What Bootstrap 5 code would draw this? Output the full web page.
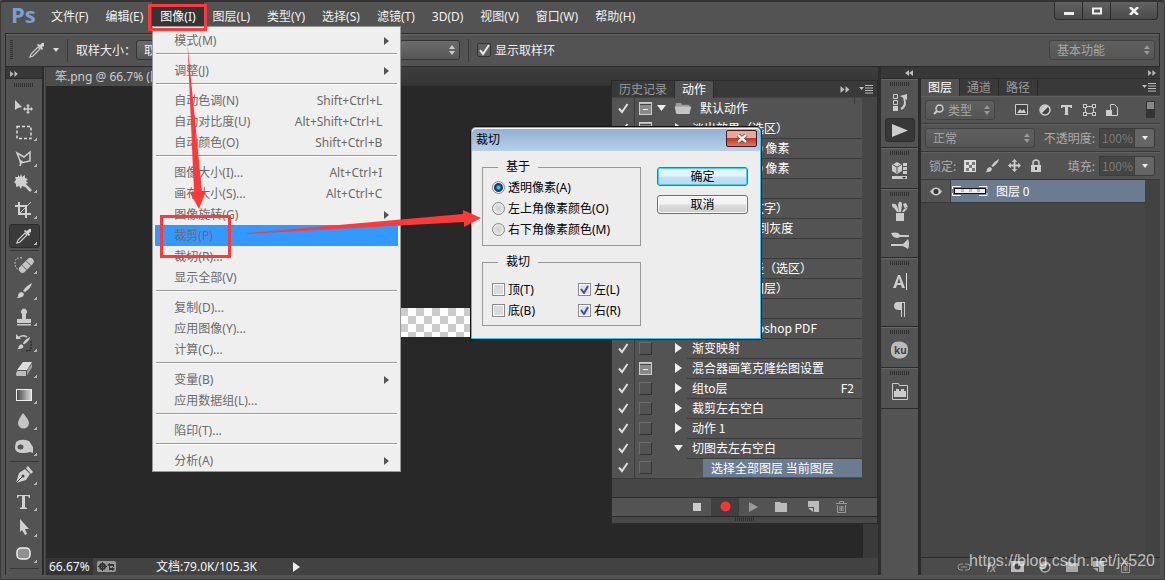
<!DOCTYPE html>
<html lang="zh-CN" data-bs-theme="dark">
<head>
<meta charset="utf-8">
<meta name="viewport" content="width=device-width, initial-scale=1">
<title>Photoshop</title>
<link href="https://cdn.jsdelivr.net/npm/bootstrap@5.3.0/dist/css/bootstrap.min.css" rel="stylesheet">
<style>
:root{--ui:#535353;--deep:#282828;--line:#2b2b2b;--hi:#666;--red:#fd3939}
body{font-family:"Noto Sans","Noto Sans CJK SC",sans-serif;font-size:12px;line-height:16px;color:#f0f0f0;background:var(--ui)}
button,input,select{font:inherit;color:inherit}
button{padding:0;border:0;background:none}
a{color:inherit;text-decoration:none}
svg{display:block;flex:none}
.cjk{font-family:"Noto Sans CJK SC",sans-serif}
.app{min-height:100vh;border:1px solid #3a3a3a;border-top:2px solid #333;border-radius:4px 4px 0 0;overflow:hidden}
.topbar{height:31px}
.logo{font:bold 22px/24px "Open Sans","Noto Sans",sans-serif;color:#76a0d4;width:42px;padding-left:10px}
.menus{gap:1px}
.menus>li>a{display:block;padding:7px 8px 4px;line-height:16px;white-space:nowrap}
.menus>li>a.open{background:#353535;color:#fff}
.winbtns{height:18px;border:1px solid var(--line);border-top:0;border-radius:0 0 4px 4px;background:linear-gradient(#626262,#4b4b4b);margin-right:6px;align-self:flex-start}
.winbtns button{width:28px;border-right:1px solid var(--line)}
.winbtns button:last-child{width:46px;border:0}
.options{height:33px;margin:0 4px 0 4px;border:1px solid var(--line);border-bottom:0;box-shadow:inset 0 1px var(--hi)}
.vgrip{width:3px;height:20px;background:repeating-linear-gradient(#333 0 1px,transparent 1px 2px)}
.vsep{width:1px;height:23px;background:#3a3a3a}
.ps-select{appearance:none;height:20px;border:1px solid #333;border-radius:3px;padding:0 20px 0 7px;color:#f0f0f0;background:url("data:image/svg+xml,%3Csvg xmlns='http://www.w3.org/2000/svg' width='6' height='10'%3E%3Cpath d='M0 4l3-4 3 4zM0 6l3 4 3-4z' fill='%23ccc'/%3E%3C/svg%3E") no-repeat right 4px center,linear-gradient(#6b6b6b,#575757);line-height:16px}
.ps-select.dim{color:#a5a5a5;border-color:#424242;background:url("data:image/svg+xml,%3Csvg xmlns='http://www.w3.org/2000/svg' width='6' height='10'%3E%3Cpath d='M0 4l3-4 3 4zM0 6l3 4 3-4z' fill='%23999'/%3E%3C/svg%3E") no-repeat right 4px center,linear-gradient(#606060,#555)}
.ps-select.size{width:324px}
.ps-select.space{width:106px}
.ps-select.kind{width:70px;padding-left:22px}
.ps-select.blend{width:110px}
.ps-check{appearance:none;width:14px;height:14px;margin:0;border:1px solid #333;border-radius:2px;background:url("data:image/svg+xml,%3Csvg xmlns='http://www.w3.org/2000/svg' width='12' height='12'%3E%3Cpath d='M2 6l3 4 6-9' fill='none' stroke='%23e8e8e8' stroke-width='2'/%3E%3C/svg%3E") center,#606060}
.stage{margin:0 4px;border-top:1px solid var(--line)}
.strip{height:12px;background:#383838;border-bottom:1px solid var(--line);color:#bbb}
.tools{width:39px;border-left:1px solid var(--line);border-right:2px solid var(--line)}
.hgrip{width:20px;height:4px;background:repeating-linear-gradient(90deg,#303030 0 1px,transparent 1px 2px)}
.tools>.hgrip{margin:4px 0 6px}
.tool{width:31px;height:26px;position:relative;color:#d0d0d0}
.tool::after{content:"";position:absolute;right:3px;bottom:4px;width:3px;height:3px;background:linear-gradient(135deg,transparent 45%,#b5b5b5 50%)}
.tool.plain::after{display:none}
.tool.on{background:#3a3a3a;border:1px solid #2c2c2c;border-radius:3px;height:24px;margin:1px 0}
.tool.on::after{right:2px;bottom:2px}
.toolsep{width:29px;height:1px;background:#3a3a3a;margin:1px 0}
.docarea{background:var(--deep);border-left:1px solid #444;margin-left:1px}
.doctabs{height:19px;background:linear-gradient(#3e3e3e,#343434)}
.doctab{background:#4c4c4c;color:#ccc;padding:1px 9px;line-height:18px;white-space:nowrap}
.checker{width:95px;height:29px;margin:222px 0 0 330px;background:repeating-conic-gradient(#ccc 0 25%,#fff 0 50%) 0 0/16px 16px}
.vscroll{width:15px;background:#3a3a3a}
.status{height:17px;background:#424242;color:#f5f5f5;line-height:17px}
.status>.zoomval{background:#343434;width:47px;padding-left:3px}
.dock{width:282px;border-left:3px solid #2e2e2e}
.iconcol{width:38px;border-right:1px solid var(--line)}
.igroup{border-bottom:1px solid var(--line);box-shadow:inset 0 1px var(--hi);padding:3px 0}
.igroup .hgrip{margin-bottom:2px}
.ibtn{width:30px;height:28px;color:#ccc}
.ibtn.on{height:24px;margin:2px 0;background:#383838;border:1px solid var(--line);border-radius:3px}
.layers{border-left:2px solid var(--line)}
.ptabs{height:17px;background:#393939;border-bottom:1px solid #444}
.ptabs .nav-link{padding:0 7px;height:17px;line-height:15px;color:#999;border-right:1px solid var(--line);border-radius:0}
.ptabs .nav-link.active{background:var(--ui);color:#fff}
.prow{height:28px;padding:0 5px 0 4px;border-bottom:1px solid #3a3a3a;box-shadow:inset 0 1px #606060;color:#aaa}
.pct{width:36px;height:20px;border:1px solid #3c3c3c;background:#454545;color:#777;padding:0 0 0 2px;line-height:18px}
.pctb{width:20px;height:20px;border:1px solid #3c3c3c;border-left:0;border-radius:0 3px 3px 0;background:#666}
.layerlist{background:#464646;border-right:15px solid #424242}
.layerrow{height:23px;border-bottom:1px solid #3a3a3a;background:#535353}
.layerrow .eye{width:30px;border-right:1px solid #3a3a3a}
.layerrow .pick{background:#6b7b90;color:#fff;padding-left:1px}
.pfoot{height:18px;color:#aaa;background:#4b4b4b;border-top:1px solid var(--line)}
.pfoot button{width:27px}
.actfoot button{width:28px}
.watermark{position:absolute;right:9px;bottom:8px;font:16px/20px "Liberation Sans",sans-serif;color:rgba(255,255,255,.65)}
.actions{position:absolute;right:286px;top:78px;width:267px;background:#464646;border:1px solid var(--line);color:#fff}
.acts{width:250px;background:#535353;border-collapse:collapse;border-bottom:1px solid #3a3a3a}
.acts td{height:20px;padding:0;vertical-align:middle}
.acts .c1{width:22px;padding-left:2px;border-right:1px solid #3a3a3a}
.acts .c2{width:20px}
.acts .c3{width:33px}
.acts .nm{border-bottom:1px solid #3a3a3a;padding-left:5px;white-space:nowrap}
.acts .nm.deep span{display:block;background:#6b7b90;margin-left:11px;padding-left:8px;line-height:18px}
.acts .nm.head{border:0;padding-left:3px}
.bx{width:13px;height:13px;border:1px solid #6b6b6b;border-color:#6b6b6b #333 #333 #6b6b6b;margin-left:4px}
.bx.full{background:linear-gradient(#bbb 0 1px,#444 1px 2px,#8a8a8a 2px),#8a8a8a;border-color:#ccc;position:relative}
.bx.full::after{content:"";position:absolute;left:3px;top:6px;width:5px;height:1px;background:#eee}
.actgap{height:18px}
.actfoot{height:19px;border-top:1px solid var(--line);background:#535353;color:#bbb;padding-right:18px}
.actfoot .rec{background:#404040}
.actbot{height:7px;border-top:1px solid var(--line);background:#484848}
.psmenu{position:absolute;left:0;top:100%;z-index:5;width:249px;margin:-3px 0 0;padding:3px 2px 0;background:#efefef;border:1px solid #999;color:#6b6b6b;list-style:none}
.psmenu a{display:flex;justify-content:space-between;align-items:center;height:21px;padding:0 16px 0 19px;line-height:20px}
.psmenu a.hot{background:#3399ff}
.psmenu a.sub{padding-right:9px}
.psmenu hr{margin:2px 1px 5px;border:0;border-top:1px solid #999;border-bottom:1px solid #fff;opacity:1;height:2px}
.dlg{position:absolute;left:470px;top:126px;width:292px;height:214px;background:#ededed;color:#000;border:1px solid #111;border-radius:6px 6px 0 0;box-shadow:inset 0 0 0 1px #35c4ee;padding:1px;z-index:6}
.dlg .ttl{height:23px;background:linear-gradient(#93b1d2,#b8cfe9);border-radius:5px 5px 0 0;padding-left:4px;border-top:1px solid #fff}
.dlg .xbtn{width:31px;height:17px;margin:1px 3px 4px;border:1px solid #46181c;border-radius:2px;background:linear-gradient(#e7a79b 0 45%,#bd3a25 50%,#d6796a)}
.dlg .sets{margin:8px 16px 0 10px}
.dlg .side{padding-top:16px;gap:9px}
.dlg fieldset{border:1px solid #999;width:159px;height:87px;padding:0 9px}
.dlg fieldset.edges{height:72px;margin-top:8px}
.dlg legend{float:none;width:auto;font-size:12px;line-height:16px;margin:0 0 2px 6px;padding:0 8px}
.dlg .edges legend{margin-bottom:9px}
.dlg label{display:flex;align-items:center;gap:3px;height:21px;line-height:21px}
.dlg .pair{display:grid;grid-template-columns:86px 1fr}
.dlg input{appearance:none;width:13px;height:13px;margin:0;flex:none}
.dlg input[type=radio]{border:1px solid #888;border-radius:50%;background:radial-gradient(#ccc,#f6f6f6)}
.dlg input[type=radio]:checked{background:radial-gradient(#3fc0ee 0 1px,#123e70 3px 4px,#eee 5px)}
.dlg input[type=checkbox]{border:1px solid #8a8a8a;box-shadow:inset 0 0 0 1px #fff;background:#d8dade}
.dlg input[type=checkbox]:checked{background:url("data:image/svg+xml,%3Csvg xmlns='http://www.w3.org/2000/svg' width='11' height='11'%3E%3Cpath d='M2 5l3 4 4-7' fill='none' stroke='%233c4fa0' stroke-width='2'/%3E%3C/svg%3E") center,#dfe2ea}
.wbtn{width:91px;height:19px;border:1px solid #707070;border-radius:3px;background:linear-gradient(#f3f3f3 0 48%,#dcdcdc 52%,#cfcfcf);box-shadow:inset 0 0 0 1px #fbfbfb;line-height:18px}
.wbtn.def{border-color:#2c7fb0;box-shadow:inset 0 0 0 1px #3fd0f7;background:linear-gradient(#e6f3fb 0 48%,#c4e3f3 52%,#b5daee)}
.marks{position:absolute;left:0;top:0;z-index:8;pointer-events:none}
.footline{height:4px}
</style>
</head>
<body>
<svg width="0" height="0" class="position-absolute" aria-hidden="true">
<defs>
<linearGradient id="gr"><stop offset="0" stop-color="#444"/><stop offset="1" stop-color="#ddd"/></linearGradient>
<symbol id="dropper" viewBox="0 0 16 16"><path d="M1 15l1-3 7-7 2 2-7 7z" fill="none" stroke="#ccc" stroke-width="1.2"/><path d="M8 3l1-1 2 1 2-2q2-1 2 1v2l-2 1 1 2-1 1z" fill="#d5d5d5"/></symbol>
<symbol id="dbl" viewBox="0 0 9 7"><path d="M0 0l4 3.500-4 3.500zM5 0l4 3.500-4 3.500z" fill="#bbb"/></symbol>
<symbol id="pmenu" viewBox="0 0 14 9"><path d="M0 2h5l-2.500 3zM6 0h8v1H6zM6 2.500h8v1H6zM6 5h8v1H6zM6 7.500h8v1H6z" fill="#bbb"/></symbol>
<symbol id="ck" viewBox="0 0 11 11"><path d="M1 5.500l3 3.500 5.500-8" fill="none" stroke="#dcdcdc" stroke-width="2"/></symbol>
<symbol id="folder" viewBox="0 0 18 13"><path d="M1 2l1-1h5l1 2h8v9H1z" fill="#999"/><path d="M0 5h18l-2 8H2z" fill="#c4c4c4"/></symbol>
<symbol id="fold2" viewBox="0 0 12 11"><path d="M0 1h5l1 1h6v9H0z" fill="currentColor"/></symbol>
<symbol id="newi" viewBox="0 0 11 11"><path d="M0 0h11v11H6V6H0z" fill="currentColor"/><path d="M0 7h5v4z" fill="currentColor"/></symbol>
<symbol id="trash" viewBox="0 0 11 12"><path d="M0 2.500h11M3.500 2V.5h4V2M1.500 4v7.500h8V4M4 5v5M5.500 5v5M7 5v5" fill="none" stroke="#999"/></symbol>
<symbol id="move4" viewBox="0 0 14 14"><path d="M7 0l3 3H8v3h3V4l3 3-3 3V8H8v3h2l-3 3-3-3h2V8H3v2L0 7l3-3v2h3V3H4z" fill="currentColor"/></symbol>
<symbol id="brush" viewBox="0 0 18 16"><path d="M17 0q-1 5-7 9L8 8q3-5 9-8z" fill="currentColor"/><path d="M7 9l2 2q0 4-8 4 3-1 2-3 1-3 4-3z" fill="currentColor"/></symbol>
<symbol id="half" viewBox="0 0 12 12"><circle cx="6" cy="6" r="5" fill="#444" stroke="currentColor" stroke-width="1.500"/><path d="M2.500 9.500A5 5 0 0 1 9.500 2.500z" fill="currentColor"/></symbol>
</defs>
</svg>

<div class="app position-relative d-flex flex-column">
  <header class="topbar d-flex">
    <div class="logo">Ps</div>
    <nav>
      <ul class="menus list-unstyled d-flex m-0">
        <li><a href="#">文件(F)</a></li><li><a href="#">编辑(E)</a></li>
        <li class="position-relative"><a href="#" class="open">图像(I)</a>
          <ul class="psmenu">
            <li><a href="#" class="sub">模式(M)<svg width="5" height="8"><path d="M0 0l5 4-5 4z" fill="#555"/></svg></a></li>
            <li><hr></li>
            <li><a href="#" class="sub">调整(J)<svg width="5" height="8"><path d="M0 0l5 4-5 4z" fill="#555"/></svg></a></li>
            <li><hr></li>
            <li><a href="#">自动色调(N)<span>Shift+Ctrl+L</span></a></li>
            <li><a href="#">自动对比度(U)<span>Alt+Shift+Ctrl+L</span></a></li>
            <li><a href="#">自动颜色(O)<span>Shift+Ctrl+B</span></a></li>
            <li><hr></li>
            <li><a href="#">图像大小(I)...<span>Alt+Ctrl+I</span></a></li>
            <li><a href="#">画布大小(S)...<span>Alt+Ctrl+C</span></a></li>
            <li><a href="#" class="sub">图像旋转(G)<svg width="5" height="8"><path d="M0 0l5 4-5 4z" fill="#555"/></svg></a></li>
            <li><a href="#" class="hot">裁剪(P)</a></li>
            <li><a href="#">裁切(R)...</a></li>
            <li><a href="#">显示全部(V)</a></li>
            <li><hr></li>
            <li><a href="#">复制(D)...</a></li>
            <li><a href="#">应用图像(Y)...</a></li>
            <li><a href="#">计算(C)...</a></li>
            <li><hr></li>
            <li><a href="#" class="sub">变量(B)<svg width="5" height="8"><path d="M0 0l5 4-5 4z" fill="#555"/></svg></a></li>
            <li><a href="#">应用数据组(L)...</a></li>
            <li><hr></li>
            <li><a href="#">陷印(T)...</a></li>
            <li><hr></li>
            <li><a href="#" class="sub">分析(A)<svg width="5" height="8"><path d="M0 0l5 4-5 4z" fill="#555"/></svg></a></li>
          </ul>
        </li>
        <li><a href="#">图层(L)</a></li><li><a href="#">类型(Y)</a></li><li><a href="#">选择(S)</a></li><li><a href="#">滤镜(T)</a></li><li><a href="#">3D(D)</a></li><li><a href="#">视图(V)</a></li><li><a href="#">窗口(W)</a></li><li><a href="#">帮助(H)</a></li>
      </ul>
    </nav>
    <div class="winbtns d-flex ms-auto">
      <button aria-label="最小化"><svg class="m-auto" width="10" height="11"><path d="M0 7h10v3H0z" fill="#eee"/></svg></button>
      <button aria-label="最大化"><svg class="m-auto" width="10" height="8"><path d="M1 1.500h8v5H1z" fill="none" stroke="#eee" stroke-width="2"/></svg></button>
      <button aria-label="关闭"><svg class="m-auto" width="10" height="8"><path d="M1 0l8 8M9 0L1 8" stroke="#eee" stroke-width="2.500"/></svg></button>
    </div>
  </header>

  <div class="options d-flex align-items-center cjk">
    <div class="vgrip ms-1"></div>
    <svg class="ms-3" width="16" height="16"><use href="#dropper"/></svg>
    <svg class="ms-2" width="6" height="4"><path d="M0 0h6L3 4z" fill="#ddd"/></svg>
    <div class="vsep ms-2 me-2"></div>
    <label for="sample" class="text-nowrap">取样大小：</label>
    <select id="sample" class="ps-select size"><option>取样点</option></select>
    <div class="vsep mx-2"></div>
    <input type="checkbox" id="ring" class="ps-check" checked>
    <label for="ring" class="ms-1">显示取样环</label>
    <select aria-label="工作区" class="ps-select dim space ms-auto me-1"><option>基本功能</option></select>
  </div>

  <main class="stage d-flex flex-grow-1">
    <aside class="tools d-flex flex-column align-items-center">
      <div class="strip w-100 flex-shrink-0"><svg class="ms-1 mt-1" width="8" height="6"><use href="#dbl"/></svg></div>
      <div class="hgrip flex-shrink-0"></div>
      <button class="tool plain" aria-label="移动"><svg width="31" height="26"><path d="M6 7v10l3-2 4-1z" fill="#d0d0d0"/><use href="#move4" x="14" y="11" width="10" height="10"/></svg></button>
      <button class="tool" aria-label="选框"><svg width="31" height="26"><path d="M8 7.500h14v12H8z" fill="none" stroke="#ddd" stroke-width="1.500" stroke-dasharray="3 2"/></svg></button>
      <button class="tool" aria-label="套索"><svg width="31" height="26"><path d="M8 8l7 4 6-5v9l-9 2zM12 18q-2-1 0-2 2 1 0 2l-1 3" fill="none" stroke="#d0d0d0" stroke-width="1.500"/></svg></button>
      <button class="tool" aria-label="魔棒"><svg width="31" height="26"><path d="M12 3l1 3 3-2v3l3 1-2 2 2 2-3 1v3l-3-1-1 3-2-3-3 1v-3l-2-2 2-2-1-3h3V4l2 2z" fill="#d0d0d0"/><path d="M15 13l7 7" stroke="#d0d0d0" stroke-width="2.500"/></svg></button>
      <button class="tool" aria-label="裁剪"><svg width="31" height="26"><path d="M10 5v12h12M6 9h11v12" fill="none" stroke="#d0d0d0" stroke-width="2"/><path d="M11 16L22 5" stroke="#d0d0d0"/></svg></button>
      <button class="tool on" aria-label="吸管"><svg class="m-auto" width="16" height="16"><use href="#dropper"/></svg></button>
      <div class="toolsep"></div>
      <button class="tool" aria-label="修复画笔"><svg width="31" height="26"><g transform="rotate(-45 17 13)"><rect x="8" y="10" width="18" height="7" rx="3.500" fill="#c5c5c5"/><path d="M14 10v7M20 10v7" stroke="#777"/></g><path d="M13 6q-7-1-7 5 0 5 3 6" fill="none" stroke="#ddd" stroke-dasharray="1.500 1.500"/></svg></button>
      <button class="tool" aria-label="画笔"><svg width="31" height="26"><use href="#brush" x="6" y="5" width="18" height="16"/></svg></button>
      <button class="tool" aria-label="图章"><svg width="31" height="26"><path d="M13 10a3 3 0 1 1 4 0v5h5v4H8v-4h5zM8 20h14v1.500H8z" fill="#ccc"/></svg></button>
      <button class="tool" aria-label="历史画笔"><svg width="31" height="26"><use href="#brush" x="7" y="6" width="15" height="15"/><path d="M9 8q4-4 9-1" fill="none" stroke="#ccc" stroke-width="1.500"/><path d="M7 4v5h5z" fill="#ccc"/><path d="M22 11v9l-5 1" fill="none" stroke="#222" stroke-dasharray="2 1"/></svg></button>
      <button class="tool" aria-label="橡皮"><svg width="31" height="26"><path d="M14 6h9l-5 8H8z" fill="#ddd"/><path d="M8 15h9v5H8q-2-1 0-5z" fill="#bbb"/><path d="M18 14.500l5-7v4l-5 8z" fill="#999"/></svg></button>
      <button class="tool" aria-label="渐变"><svg width="31" height="26"><rect x="7.500" y="7.500" width="15" height="11" fill="url(#gr)" stroke="#eee"/></svg></button>
      <button class="tool" aria-label="模糊"><svg width="31" height="26"><path d="M14 5q6 7 6 10a5.500 5.500 0 0 1-11 0q0-3 5-10z" fill="#c5c5c5"/></svg></button>
      <button class="tool" aria-label="海绵"><svg width="31" height="26"><path d="M7 8q5-4 13-1l4 6v6l-3-1q-3 1-7 1-8 0-8-5 0-2 1-6z" fill="#ccc"/><ellipse cx="11.500" cy="13" rx="3" ry="2.500" fill="#555"/></svg></button>
      <div class="toolsep"></div>
      <button class="tool" aria-label="钢笔"><svg width="31" height="26"><path d="M7 20l3-10 6-4 5 5-4 6z" fill="#d0d0d0"/><path d="M17 5l2-2 5 6-2 2z" fill="#d0d0d0"/><path d="M7 20l6-6" stroke="#444"/><circle cx="14" cy="13" r="1.500" fill="#444"/></svg></button>
      <button class="tool" aria-label="文字"><svg width="31" height="26"><path d="M8 6h13v3h-1q0-2-2-2h-2v11l2 1v1h-7v-1l2-1V7h-2q-2 0-2 2H8z" fill="#d0d0d0"/></svg></button>
      <button class="tool" aria-label="路径选择"><svg width="31" height="26"><path d="M11 4l9 10h-4l2 5-2 1-3-5-2 2z" fill="#d0d0d0"/></svg></button>
      <button class="tool" aria-label="圆角矩形"><svg width="31" height="26"><rect x="8" y="7" width="13" height="11" rx="4" fill="#909090" stroke="#eee" stroke-width="1.500"/></svg></button>
      <div class="toolsep"></div>
    </aside>

    <section class="docarea flex-grow-1 d-flex flex-column">
      <div class="doctabs d-flex"><div class="doctab">笨.png @ 66.7% (图层 0, RGB/8)</div></div>
      <div class="d-flex flex-grow-1">
        <div class="flex-grow-1"><div class="checker"></div></div>
        <div class="vscroll"></div>
      </div>
      <div class="status d-flex align-items-center">
        <div class="zoomval">66.67%</div>
        <svg class="ms-1" width="19" height="11"><rect width="19" height="11" rx="2" fill="#999"/><circle cx="5.500" cy="5.500" r="2.500" fill="none" stroke="#333" stroke-width="2"/><path d="M5.500 1v9M1 5.500h9" stroke="#333"/><path d="M10 4l3-2v1h4v3h-1V5h-3v1zM18 8l-3 2V9h-3V6h1v1h2V6z" fill="#333"/></svg>
        <div class="ms-3 ps-4">文档:79.0K/105.3K</div>
        <svg class="ms-4 translate-none" width="23" height="10"><path d="M12 0l7 5-7 5z" fill="#eee"/></svg>
      </div>
    </section>

    <aside class="dock d-flex flex-column">
      <div class="strip d-flex justify-content-between align-items-center"><svg class="ms-4" width="8" height="6"><path d="M4 0v6L0 3zM8 0v6L4 3z" fill="#bbb"/></svg><svg class="me-1" width="8" height="6"><use href="#dbl"/></svg></div>
      <div class="d-flex flex-grow-1">
        <div class="iconcol">
          <div class="igroup d-flex flex-column align-items-center"><div class="hgrip"></div>
            <button class="ibtn" aria-label="历史记录"><svg width="30" height="28"><path d="M8.500 6.500h4v4h-4zM8.500 12.500h4v4h-4z" fill="none" stroke="#ccc"/><path d="M8 18h5v5H8z" fill="#ccc"/><path d="M16 21q6-3 3-11" fill="none" stroke="#ccc" stroke-width="2"/><path d="M15 8l7-2v6z" fill="#ccc"/></svg></button>
            <button class="ibtn on" aria-label="动作"><svg class="m-auto" width="16" height="13"><path d="M0 0l16 6.500L0 13z" fill="#ccc"/></svg></button></div>
          <div class="igroup d-flex flex-column align-items-center"><div class="hgrip"></div>
            <button class="ibtn" aria-label="3D"><svg width="30" height="28"><path d="M12 5l5 3v6l-5 3-5-3V8zM18 6h4v3h-4zM18 10h4v3h-4zM18 14h4v3h-4zM7 19h15v3H7z" fill="#ccc"/><path d="M8 8l4 2 4-2M12 10v6" fill="none" stroke="#555"/><path d="M17 20h4l-2 2z" fill="#333"/></svg></button></div>
          <div class="igroup d-flex flex-column align-items-center"><div class="hgrip"></div>
            <button class="ibtn" aria-label="画笔预设"><svg width="30" height="28"><path d="M11 15h8v8h-8zM7 6q4-1 5 2l2 6h-2l-3-4q-2 0-2-4zM14 4q3-1 3 3l-1 7h-2l-1-7zM23 8q-3 3-4 3l-2 3h2l3-3zM18 6l3-1 2 4-3 2z" fill="#ccc"/></svg></button>
            <button class="ibtn" aria-label="画笔"><svg width="30" height="28"><path d="M6 7q4-1 7 0l2 2h9v2h-9q-6 3-9-4zM6 18h12l5-5q2 5 0 10l-5-3H6z" fill="#ccc"/></svg></button></div>
          <div class="igroup d-flex flex-column align-items-center"><div class="hgrip"></div>
            <button class="ibtn" aria-label="字符"><svg width="30" height="28"><path d="M8 21l5-13h2l5 13h-3l-1-3h-4l-1 3zM12.500 16h3L14 11z" fill="#ccc" fill-rule="evenodd"/><path d="M21.500 6v17" stroke="#ddd"/></svg></button>
            <button class="ibtn" aria-label="段落"><svg width="30" height="28"><path d="M13 7h7v15h-1V8h-2v14h-1v-7h-2q-5 0-5-4 0-4 4-4z" fill="#ccc"/></svg></button></div>
          <div class="igroup d-flex flex-column align-items-center"><div class="hgrip"></div>
            <button class="ibtn" aria-label="kuler"><svg width="30" height="28"><path d="M10 6q8-2 12 3 2 5 0 10-4 5-11 3-6-2-5-9 0-5 4-7z" fill="#bbb"/><text x="9" y="18" font-size="10" font-weight="bold" fill="#444">ku</text></svg></button></div>
          <div class="igroup d-flex flex-column align-items-center"><div class="hgrip"></div>
            <button class="ibtn" aria-label="扩展"><svg width="30" height="28"><path d="M7.500 6.500h6l1 2h8v14h-15z" fill="none" stroke="#ccc"/><path d="M9 14h2v-2h3v2h2v-2h3v2h2v6H9z" fill="#ccc"/></svg></button></div>
        </div>

        <section class="layers flex-grow-1 d-flex flex-column cjk">
          <div class="ptabs nav flex-nowrap">
            <a href="#" class="nav-link active">图层</a><a href="#" class="nav-link">通道</a><a href="#" class="nav-link">路径</a>
            <svg class="ms-auto me-1 my-auto" width="14" height="9"><use href="#pmenu"/></svg>
          </div>
          <div class="prow d-flex align-items-center">
            <select aria-label="筛选" class="ps-select dim kind"><option>类型</option></select>
            <svg class="position-absolute ms-2" width="11" height="11"><circle cx="6.500" cy="4.500" r="3.500" fill="none" stroke="#ccc" stroke-width="1.500"/><path d="M4 7l-3 3" stroke="#ccc" stroke-width="2"/></svg>
            <div class="d-flex align-items-center flex-grow-1 justify-content-between ps-3 ms-1 me-4 pe-1 text-light">
              <svg width="13" height="12"><path d="M.5.5h12v10H.5z" fill="#444" stroke="#ccc"/><path d="M2 9l3-4 2 2 2-2 2 4z" fill="#ccc"/></svg>
              <svg width="12" height="12" color="#ccc"><use href="#half"/></svg>
              <svg width="11" height="12"><path d="M0 1h11v3h-1l-1-1H7v7l1 1H3l1-1V3H2L1 4H0z" fill="#ccc"/></svg>
              <svg width="13" height="12"><path d="M2.500 2.500h8v7h-8z" fill="none" stroke="#ccc"/><path d="M0 0h4v4H0zM9 0h4v4H9zM0 8h4v4H0zM9 8h4v4H9z" fill="#ccc"/><path d="M1 1h2v2H1zM10 1h2v2h-2zM1 9h2v2H1zM10 9h2v2h-2z" fill="#444"/></svg>
              <svg width="12" height="12"><path d="M4.500.5h4l3 3v8h-7z" fill="none" stroke="#ccc"/><path d="M0 6h6v6H0z" fill="#ccc"/></svg>
            </div>
            <svg width="9" height="17"><path d="M0 0h9v17H0z" fill="#333"/><path d="M1 1h7v7H1z" fill="#888"/></svg>
          </div>
          <div class="prow d-flex align-items-center">
            <select aria-label="混合模式" class="ps-select dim blend"><option>正常</option></select>
            <label for="op" class="ms-auto text-nowrap me-1">不透明度:</label><input id="op" class="pct" value="100%"><button class="pctb" aria-label="不透明度滑块"><svg class="m-auto" width="6" height="4"><path d="M0 0h6L3 4z" fill="#eee"/></svg></button>
          </div>
          <div class="prow d-flex align-items-center">
            <span class="ms-1 me-1">锁定:</span>
            <div class="d-flex gap-2 align-items-center ms-1 text-light">
              <svg width="12" height="12"><path d="M0 0h12v12H0z" fill="#ddd"/><path d="M2 2h3v3H2zM8 2h3v3H8zM5 5h3v3H5zM2 8h3v3H2zM8 8h3v3H8z" fill="#777"/></svg>
              <svg width="16" height="14" color="#ccc"><use href="#brush"/></svg>
              <svg width="13" height="13" color="#ccc"><use href="#move4"/></svg>
              <svg width="14" height="13"><path d="M4 6V4q0-3 3-3t3 3v2" fill="none" stroke="#ccc" stroke-width="1.500"/><path d="M2 6h10v7H2z" fill="#ccc"/><path d="M6 8h2v3H6z" fill="#444"/></svg>
            </div>
            <label for="fl" class="ms-auto text-nowrap me-1">填充:</label><input id="fl" class="pct" value="100%"><button class="pctb" aria-label="填充滑块"><svg class="m-auto" width="6" height="4"><path d="M0 0h6L3 4z" fill="#eee"/></svg></button>
          </div>
          <div class="layerlist flex-grow-1">
            <div class="layerrow d-flex">
              <div class="eye d-flex align-items-center justify-content-center"><svg width="12" height="9"><path d="M0 4.500q6-8 12 0-6 8-12 0z" fill="#ccc"/><circle cx="6" cy="4.500" r="2.500" fill="#333"/></svg></div>
              <div class="pick flex-grow-1 d-flex align-items-center"><svg width="36" height="10"><path d="M.5 3V.5H9M27 .5h8V3M.5 7v2.500H9M27 9.500h8V7" fill="none" stroke="#fff"/><path d="M2 2h32v6H2z" fill="#111"/><path d="M3 3h30v4H3z" fill="#eee"/><path d="M9 3h3v3H9zM17 3h3v3h-3zM25 3h3v3h-3z" fill="#bbb"/></svg><span class="ms-2">图层 0</span></div>
            </div>
          </div>
          <div class="pfoot d-flex align-items-center justify-content-center ps-2">
            <button aria-label="链接"><svg class="m-auto" width="14" height="8"><path d="M6 1H4a3 3 0 0 0 0 6h2M8 1h2a3 3 0 0 1 0 6H8M4 4h6" fill="none" stroke="#999"/></svg></button>
            <button aria-label="样式"><em>fx</em></button>
            <button aria-label="蒙版"><svg class="m-auto" width="13" height="11"><path d="M0 0h13v11H0z" fill="#bbb"/><circle cx="6.500" cy="5.500" r="3" fill="#444"/></svg></button>
            <button aria-label="调整"><svg class="m-auto" width="12" height="12"><use href="#half"/></svg></button>
            <button aria-label="新组"><svg class="m-auto" width="12" height="11"><use href="#fold2"/></svg></button>
            <button aria-label="新建图层"><svg class="m-auto" width="11" height="11"><use href="#newi"/></svg></button>
            <button aria-label="删除图层"><svg class="m-auto" width="11" height="12"><use href="#trash"/></svg></button>
          </div>
        </section>
      </div>
    </aside>
  </main>
  <div class="footline"></div>

  <section class="actions cjk">
    <div class="ptabs nav flex-nowrap">
      <a href="#" class="nav-link">历史记录</a><a href="#" class="nav-link active">动作</a>
      <svg class="ms-auto my-auto" width="10" height="7"><use href="#dbl"/></svg><span class="vsep mx-1"></span><svg class="me-1 my-auto" width="14" height="9"><use href="#pmenu"/></svg>
    </div>
    <table class="acts"><tbody id="actRows"></tbody></table>
    <div class="actgap"></div>
    <div class="actfoot d-flex justify-content-end">
      <button aria-label="停止"><svg class="m-auto" width="8" height="8"><path d="M0 0h8v8H0z" fill="#ccc"/></svg></button>
      <button aria-label="录制" class="rec"><svg class="m-auto" width="11" height="11"><circle cx="5.500" cy="5.500" r="5" fill="#f33"/></svg></button>
      <button aria-label="播放"><svg class="m-auto" width="9" height="10"><path d="M0 0l9 5-9 5z" fill="#999"/></svg></button>
      <button aria-label="新组"><svg class="m-auto" width="12" height="11"><use href="#fold2"/></svg></button>
      <button aria-label="新动作" class="ms-1"><svg class="m-auto" width="11" height="11"><use href="#newi"/></svg></button>
      <button aria-label="删除" class="me-1"><svg class="m-auto" width="11" height="12"><use href="#trash"/></svg></button>
    </div>
    <div class="actbot d-flex justify-content-center"><div class="hgrip"></div></div>
  </section>

  <div class="watermark">https://blog.csdn.net/jx520</div>
</div>

<form class="dlg">
  <div class="ttl d-flex justify-content-between align-items-center"><span>裁切</span><button type="button" class="xbtn" aria-label="关闭"><svg class="m-auto" width="12" height="9"><path d="M2 1l8 7M10 1L2 8" stroke="#444" stroke-width="4"/><path d="M2 1l8 7M10 1L2 8" stroke="#eee" stroke-width="2.500"/></svg></button></div>
  <div class="d-flex">
    <div class="sets">
      <fieldset><legend>基于</legend>
        <label><input type="radio" name="b" checked>透明像素(A)</label>
        <label><input type="radio" name="b">左上角像素颜色(O)</label>
        <label><input type="radio" name="b">右下角像素颜色(M)</label>
      </fieldset>
      <fieldset class="edges"><legend>裁切</legend>
        <div class="pair">
          <label><input type="checkbox">顶(T)</label><label><input type="checkbox" checked>左(L)</label>
          <label><input type="checkbox">底(B)</label><label><input type="checkbox" checked>右(R)</label>
        </div>
      </fieldset>
    </div>
    <div class="side d-flex flex-column">
      <button type="button" class="wbtn def">确定</button>
      <button type="button" class="wbtn">取消</button>
    </div>
  </div>
</form>

<svg class="marks" width="500" height="270" aria-hidden="true">
  <g fill="none" stroke="#fd3939" stroke-width="3"><path d="M149.500 5.500h56v24h-56zM161.500 216.500h68v40h-68z"/></g>
  <path d="M187.500 44L202 192l4-1-7 18-9-16 4-1zM247 234v-1L463 214v-4l18 8-17 9v-5z" fill="#fd3939"/>
</svg>

<script src="https://cdn.jsdelivr.net/npm/bootstrap@5.3.0/dist/js/bootstrap.bundle.min.js"></script>
<script>
// name, dialog toggle on, kind (set / open / leaf), shortcut
const rows=[["默认动作",1,"set"],["淡出效果（选区）",1],["画框通道 - 50 像素",0],["木质画框 - 50 像素",1],["投影（文字）",0],["水中倒影（文字）",0],["自定义 RGB 到灰度",1],["熔化的铅块",0],["制作剪贴路径（选区）",0],["棕褐色调（图层）",0],["四分颜色",0],["存储为 Photoshop PDF",0],["渐变映射",0],["混合器画笔克隆绘图设置",1],["组to层",0,"","F2"],["裁剪左右空白",0],["动作 1",0],["切图去左右空白",0,"open"],["选择全部图层 当前图层",0,"leaf"]];
const down='<svg width="9" height="6"><path d="M0 0h9L4.500 6z" fill="#eee"/></svg>',right='<svg width="7" height="10"><path d="M0 0l7 5-7 5z" fill="#eee"/></svg>';
document.getElementById("actRows").innerHTML=rows.map(([n,d,k,s])=>{
 const a='<tr><td class="c1"><svg class="mx-auto" width="11" height="11"><use href="#ck"/></svg></td><td class="c2"><div class="bx'+(d?' full':'')+'"></div></td>';
 if(k==="set")return a+'<td class="nm head" colspan="2"><div class="d-flex align-items-center gap-2">'+down+'<svg width="18" height="12"><use href="#folder"/></svg>'+n+'</div></td></tr>';
 if(k==="leaf")return a+'<td class="c3"></td><td class="nm deep"><span>'+n+'</span></td></tr>';
 return a+'<td class="c3"><div class="d-flex justify-content-center ps-3">'+(k?down:right)+'</div></td><td class="nm"><div class="d-flex justify-content-between pe-2">'+n+(s?'<span>'+s+'</span>':'')+'</div></td></tr>';
}).join("");
</script>
</body>
</html>
